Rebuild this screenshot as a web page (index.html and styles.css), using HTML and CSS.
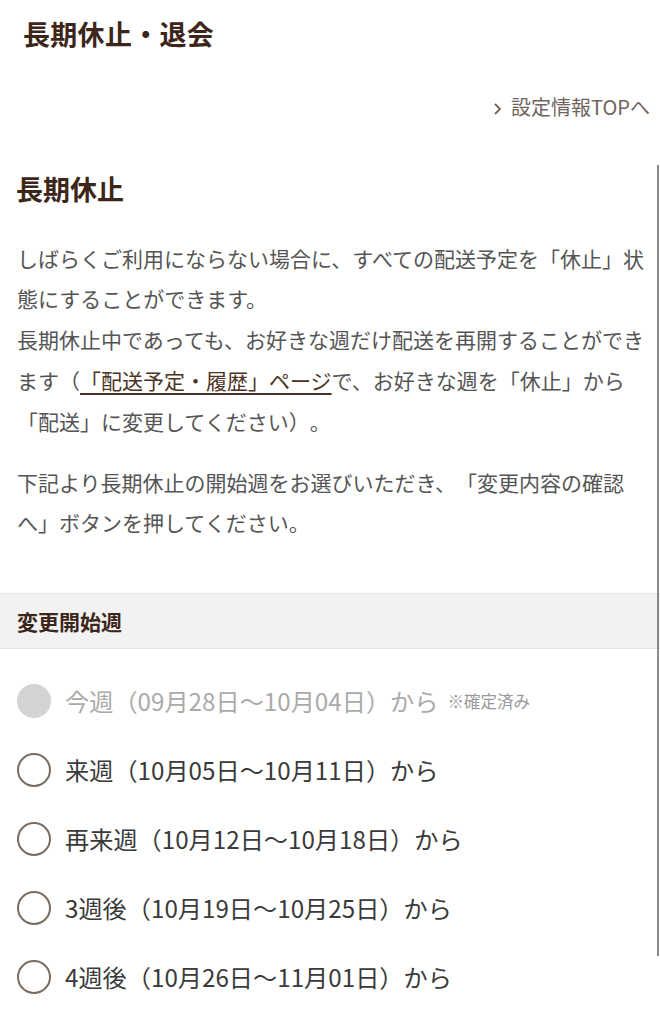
FILE: index.html
```html
<!DOCTYPE html>
<html lang="ja">
<head>
    <meta charset="UTF-8">
    <meta name="viewport" content="width=device-width, initial-scale=1.0">
    <title>長期休止・退会</title>
    <link rel="stylesheet" href="styles.css">
</head>
<body>
    <header class="page-head">
        <h1 class="page-title">長期休止・退会</h1>
    </header>

    <div class="top-link">
        <a href="#">
            <svg class="chev" width="9" height="14" viewBox="0 0 9 14"><polyline points="2,2 7,7 2,12" fill="none" stroke="#6f655e" stroke-width="1.8"/></svg>設定情報TOPへ
        </a>
    </div>

    <section class="pause">
        <h2 class="pause-title">長期休止</h2>
        <p class="pause-text"><span>しばらくご利用にならない場合に、すべての配送予定を「休止」状</span><span>態にすることができます。</span><br><span>長期休止中であっても、お好きな週だけ配送を再開することができ</span><span>ます（</span><a href="#" class="text-link">「配送予定・履歴」ページ</a><span>で、お好きな週を「休止」から</span><span>「配送」に変更してください）。</span></p>
        <p class="pause-text"><span>下記より長期休止の開始週をお選びいただき、「変更内容の確認</span><span>へ」ボタンを押してください。</span></p>
    </section>

    <section class="week">
        <h3 class="week-head">変更開始週</h3>
        <ul class="week-list">
            <li class="week-item is-disabled">
                <label><input type="radio" name="week" disabled><span class="week-label">今週（09月28日〜10月04日）から</span><span class="week-note">※確定済み</span></label>
            </li>
            <li class="week-item">
                <label><input type="radio" name="week"><span class="week-label">来週（10月05日〜10月11日）から</span></label>
            </li>
            <li class="week-item">
                <label><input type="radio" name="week"><span class="week-label">再来週（10月12日〜10月18日）から</span></label>
            </li>
            <li class="week-item">
                <label><input type="radio" name="week"><span class="week-label">3週後（10月19日〜10月25日）から</span></label>
            </li>
            <li class="week-item">
                <label><input type="radio" name="week"><span class="week-label">4週後（10月26日〜11月01日）から</span></label>
            </li>
        </ul>
    </section>

    <div class="scroll-bar"></div>
</body>
</html>
```

FILE: styles.css
```css
body {
    margin: 0;
    background-color: #fff;
    font-family: "Noto Sans CJK JP", "Noto Sans", sans-serif;
    color: #555;
    position: relative;
    text-spacing-trim: space-all;
}

.page-head {
    padding: 16px 0 0 23px;
}

.page-title {
    margin: 0;
    font-size: 27px;
    line-height: 36px;
    font-weight: bold;
    letter-spacing: 0.3px;
    color: #3b2619;
}

.top-link {
    margin-top: 41px;
    padding-right: 10px;
    text-align: right;
    font-size: 20px;
    line-height: 28px;
}

.top-link a {
    color: #6f655e;
    text-decoration: none;
}

.chev {
    margin-right: 9px;
    vertical-align: -1px;
}

.pause {
    padding: 0 10px 0 17px;
}

.pause-title {
    margin: 50px 0 0 -1px;
    font-size: 27px;
    line-height: 36px;
    font-weight: bold;
    color: #3b2619;
}

.pause-text {
    margin: 20px 0 0;
    font-size: 21px;
    line-height: 40.8px;
}

.pause-title + .pause-text {
    margin-top: 30.6px;
}

.text-link {
    color: #4a3324;
    text-decoration: underline;
    text-underline-offset: 4px;
}

.week {
    margin-top: 50px;
}

.week-head {
    margin: 0;
    padding-left: 17px;
    height: 54px;
    line-height: 54px;
    font-size: 21px;
    font-weight: bold;
    color: #3b2619;
    background-color: #f2f2f2;
    border-top: 1px solid #e6e6e6;
    border-bottom: 1px solid #e2e2e2;
}

.week-list {
    list-style: none;
    margin: 0;
    padding: 17px 0 0 17px;
}

.week-item label {
    display: flex;
    align-items: center;
    height: 69px;
    font-size: 24.2px;
    color: #3a3a3a;
}

.week-item input {
    appearance: none;
    -webkit-appearance: none;
    margin: 0 14px 0 0;
    width: 34px;
    height: 34px;
    border: 2px solid #7a6b60;
    border-radius: 50%;
    box-sizing: border-box;
    background: #fff;
}

.is-disabled label {
    color: #aaa;
}

.is-disabled input {
    border-color: #d3d3d3;
    background: #d3d3d3;
}

.week-note {
    margin-left: 9px;
    font-size: 16.5px;
    color: #999;
}

.scroll-bar {
    position: absolute;
    top: 165px;
    right: 1px;
    width: 2px;
    height: 791px;
    background-color: #8a8a8a;
}
```
